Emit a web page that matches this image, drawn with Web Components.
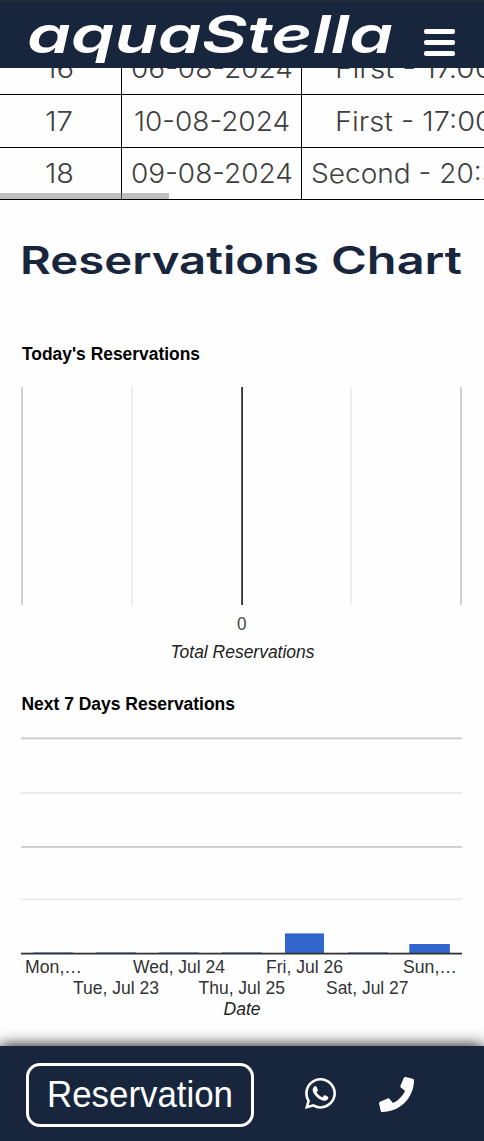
<!DOCTYPE html>
<html lang="en"><head><meta charset="utf-8"><title>aquaStella</title>
<style>body{margin:0;background:#fefefe;font-family:"Liberation Sans",Arial,sans-serif}</style></head>
<body>
<aqua-app></aqua-app>
<script>
const define = (name, html) => customElements.define(name, class extends HTMLElement {
  constructor() {
    super();
    this.attachShadow({ mode: 'open' }).innerHTML = typeof html === 'function' ? html(this) : html;
  }
});

/* Single line of text stretched to a fixed width: w, h, base(line), size, weight, text */
define('fit-text', el => {
  const a = n => el.getAttribute(n);
  return `<style>:host{display:block;line-height:0}svg{display:block;overflow:visible}</style>
  <svg width="${a('w')}" height="${a('h')}"><text x="0" y="${a('base')}" fill="currentColor" font-family="${a('face') || 'Inter'}, sans-serif" font-size="${a('size')}" font-weight="${a('weight')}" font-style="${a('slant') || 'normal'}" textLength="${a('w')}" lengthAdjust="spacingAndGlyphs">${a('text')}</text></svg>`;
});

define('site-header', `<style>
:host{display:flex;box-sizing:border-box;height:68px;flex:none;background:#18263d;border-top:1px solid #282b31;padding:0 29px 0 27px;justify-content:space-between;color:#fff}
.menu{display:flex;flex-direction:column;gap:6px;padding-top:28px}
.menu i{width:31px;height:5px;border-radius:2px;background:#fff}
</style><fit-text w="366" h="67" base="52" size="52" weight="600" slant="italic" text="aquaStella"></fit-text>
<div class="menu"><i></i><i></i><i></i></div>`);

const cell = (text, w) => `<fit-text w="${w}" h="52" base="35.5" size="27" weight="300" face="Inter" text="${text}"></fit-text>`;
const row = (n, nw, d, dw, s, sw, h) => `<div class="row" style="height:${h}px"><div>${cell(n, nw)}</div><div>${cell(d, dw)}</div><div>${cell(s, sw)}</div></div>`;
define('booking-table', `<style>
:host{display:flex;flex-direction:column;justify-content:flex-end;height:132px;overflow:hidden;flex:none;position:relative;color:#3f3f3f}
.row{display:grid;grid-template-columns:122px 180px 224px;flex:none;box-sizing:border-box;border-bottom:1px solid #000}
.row>div{display:flex;justify-content:center;box-sizing:border-box;border-right:1px solid #000;padding-right:3px}
.row>div:nth-child(2){padding:0}
.row>div:last-child{padding:0}
.row:nth-of-type(3) fit-text{margin-top:-1px}
.thumb{position:absolute;left:0;bottom:1px;width:169px;height:6px;background:rgba(128,128,128,.5)}
</style>${row('16', 29, '06-08-2024', 162, 'First - 17.00', 158, 53)}${row('17', 28, '10-08-2024', 156, 'First - 17:00', 158, 53)}${row('18', 29, '09-08-2024', 162, 'Second - 20:30', 205, 52)}<div class="thumb"></div>`);

define('section-title', `<style>:host{display:flex;justify-content:space-between;padding:39px 22px 0 20px;color:#18263d}</style>
<fit-text w="299" h="62" base="35" size="38" weight="600" text="Reservations"></fit-text>
<fit-text w="131" h="62" base="35" size="38" weight="600" text="Chart"></fit-text>`);

const text = (x, y, w, str, extra = '') => `<text x="${x}" y="${y}" textLength="${w}" lengthAdjust="spacingAndGlyphs" ${extra}>${str}</text>`;
const chartStyle = `<style>:host{display:block;flex:none}svg{display:block;overflow:visible;font:17.5px "Liberation Sans",Arial,sans-serif;fill:#333}.t{font-weight:bold;fill:#000}.i{font-style:italic;fill:#222}</style>`;
const r = (x, y, w, h, f) => `<rect x="${x}" y="${y}" width="${w}" height="${h}" fill="${f}"/>`;

define('today-chart', `${chartStyle}<svg width="484" height="350">
${text(22, 59, 178, "Today's Reservations", 'class="t"')}
${r(21.1, 86, 1.8, 218, '#ccc')}${r(131.1, 86, 1.8, 218, '#ebebeb')}${r(350.1, 86, 1.8, 218, '#ebebeb')}${r(460.1, 86, 1.8, 218, '#ccc')}
${r(241.2, 86, 1.8, 218, '#333')}
${text(237, 329, 9.5, '0', 'fill="#444"')}
${text(170.5, 357, 144, 'Total Reservations', 'class="i"')}
</svg>`);

define('week-chart', `${chartStyle}<svg width="484" height="380">
${text(21.5, 59, 213.5, 'Next 7 Days Reservations', 'class="t"')}
${r(21, 86.4, 441, 1.8, '#ccc')}${r(21, 141, 441, 1.8, '#ebebeb')}${r(21, 195, 441, 1.8, '#ccc')}${r(21, 247.4, 441, 1.8, '#ebebeb')}
${[33, 96, 159, 222, 348].map(x => r(x, 301, 40, 1, '#8ca8df')).join('')}
${r(285, 282.4, 39, 19.6, '#36c')}${r(409.3, 293, 40.6, 9, '#36c')}
${r(21, 301.7, 441, 1.8, '#333')}
${text(25, 322, 57, 'Mon,…')}${text(133, 322, 92, 'Wed, Jul 24')}${text(266, 322, 77, 'Fri, Jul 26')}${text(403, 322, 54, 'Sun,…')}
${text(73, 343, 86, 'Tue, Jul 23')}${text(198.5, 343, 86.5, 'Thu, Jul 25')}${text(326, 343, 82.5, 'Sat, Jul 27')}
${text(223.5, 364, 37, 'Date', 'class="i"')}
</svg>`);

define('contact-bar', `<style>
:host{display:flex;align-items:center;box-sizing:border-box;height:95px;flex:none;background:#18263d;padding:3px 26px 0;box-shadow:0 0 15px #000;margin-top:auto;position:relative;color:#fff}
.btn{box-sizing:border-box;width:228px;height:64px;border:3px solid #fff;border-radius:14px;padding-left:18px}
.wa{margin:0 0 4px 51px}.ph{margin:0 0 2px 43px}
svg{fill:#fff;display:block;flex:none}
</style>
<div class="btn"><fit-text face="Liberation Sans" w="186" h="58" base="41" size="36" weight="400" text="Reservation"></fit-text></div>
<svg class="wa" width="31" height="31" viewBox="0 32 448 448"><path d="M380.9 97.1C339 55.1 283.2 32 223.9 32c-122.4 0-222 99.6-222 222 0 39.1 10.2 77.3 29.6 111L0 480l117.7-30.9c32.4 17.7 68.9 27 106.1 27h.1c122.3 0 224.1-99.6 224.1-222 0-59.3-25.2-115-67.1-157zm-157 341.6c-33.2 0-65.7-8.9-94-25.7l-6.7-4-69.8 18.3L72 359.2l-4.4-7c-18.5-29.4-28.2-63.3-28.2-98.2 0-101.7 82.8-184.5 184.6-184.5 49.3 0 95.6 19.2 130.4 54.1 34.8 34.9 56.2 81.2 56.1 130.5 0 101.8-84.9 184.6-186.6 184.6zm101.2-138.2c-5.5-2.8-32.8-16.2-37.9-18-5.1-1.9-8.8-2.8-12.5 2.8-3.7 5.6-14.3 18-17.6 21.8-3.2 3.7-6.5 4.2-12 1.4-32.6-16.3-54-29.1-75.5-66-5.7-9.8 5.7-9.1 16.3-30.3 1.8-3.7.9-6.9-.5-9.7-1.4-2.8-12.5-30.1-17.1-41.2-4.5-10.8-9.1-9.3-12.5-9.5-3.2-.2-6.9-.2-10.6-.2-3.7 0-9.7 1.4-14.8 6.9-5.1 5.6-19.4 19-19.4 46.3 0 27.3 19.9 53.7 22.6 57.4 2.8 3.7 39.1 59.7 94.8 83.8 35.2 15.2 49 16.5 66.6 13.9 10.7-1.6 32.8-13.4 37.4-26.4 4.6-13 4.6-24.1 3.2-26.4-1.3-2.5-5-3.9-10.5-6.6z"/></svg>
<svg class="ph" width="35" height="35" viewBox="0 0 512 512"><path d="M493.4 24.6l-104-24c-11.3-2.6-22.9 3.3-27.5 13.9l-48 112c-4.2 9.8-1.4 21.3 6.9 28l60.6 49.6c-36 76.7-98.9 140.5-177.2 177.2l-49.6-60.6c-6.8-8.3-18.2-11.1-28-6.9l-112 48C3.9 366.5-2 378.1.6 389.4l24 104C27.1 504.2 36.7 512 48 512c256.1 0 464-207.5 464-464 0-11.2-7.7-20.9-18.6-23.4z"/></svg>`);

define('aqua-app', `<style>:host{display:flex;flex-direction:column;width:100%;height:1141px;overflow:hidden}</style>
<site-header></site-header><booking-table></booking-table><section-title></section-title><today-chart></today-chart><week-chart></week-chart><contact-bar></contact-bar>`);
</script>
</body></html>
